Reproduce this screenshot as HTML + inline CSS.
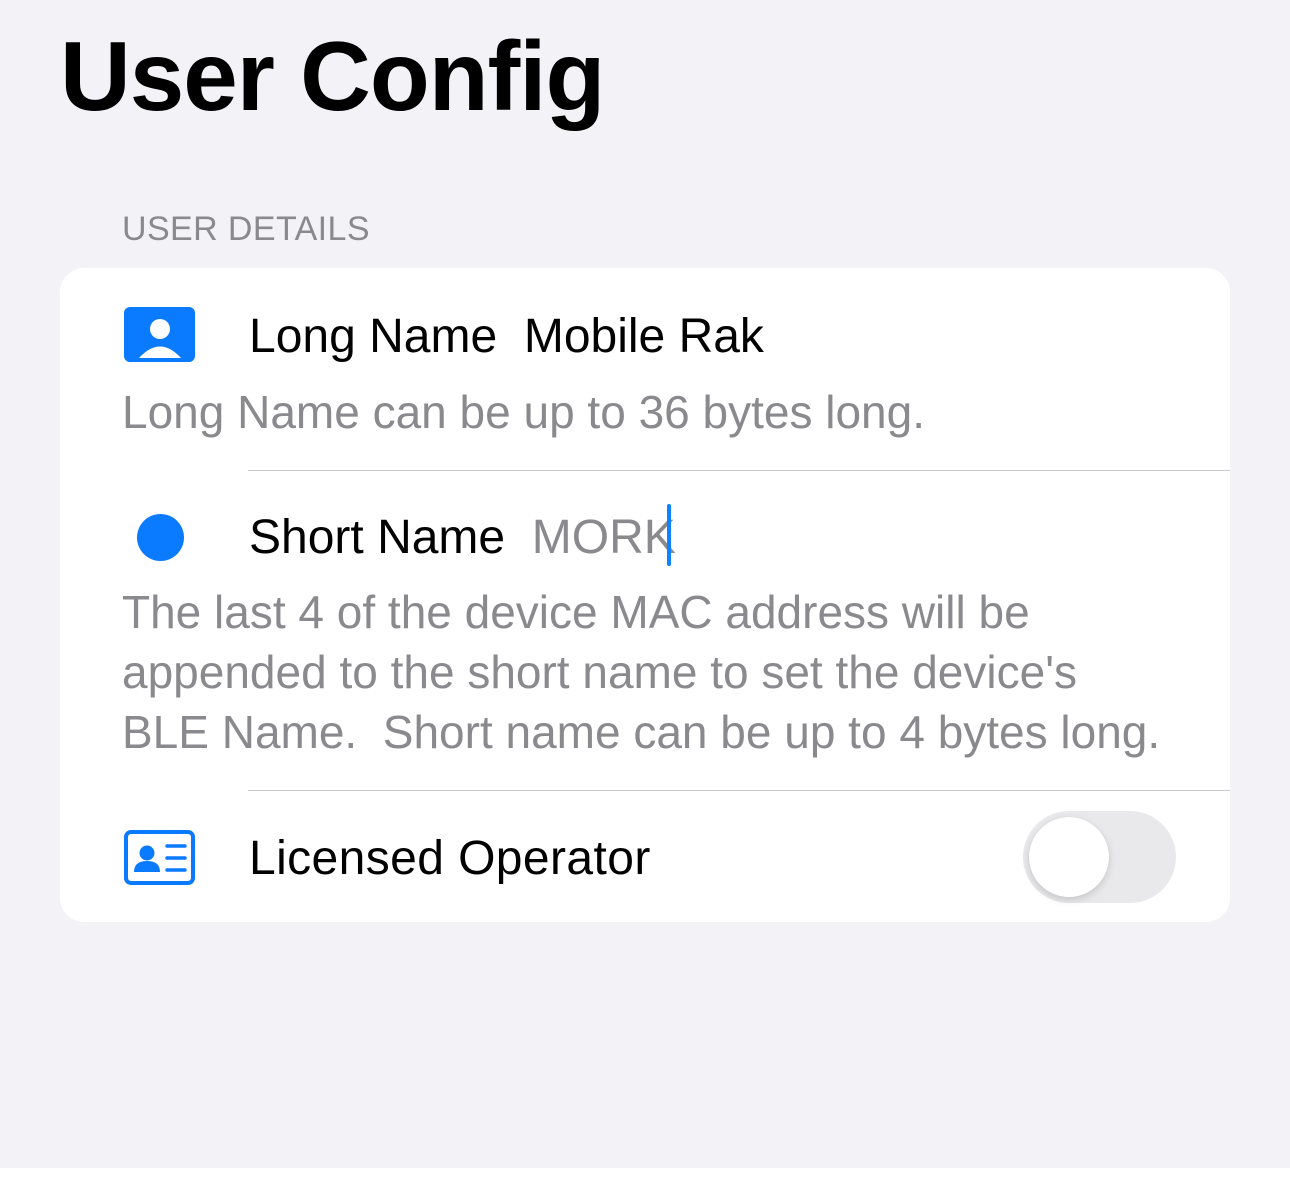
<!DOCTYPE html>
<html><head><style>
body{margin:0;width:1290px;height:1180px;background:#fff;font-family:"Liberation Sans",sans-serif;position:relative;overflow:hidden}
.bg{position:absolute;left:0;top:0;width:1290px;height:1168px;background:#f2f2f7}
.t{position:absolute;white-space:nowrap}
.card{position:absolute;left:60px;top:268px;width:1170px;height:654px;background:#fff;border-radius:24px}
.sep{position:absolute;left:248px;width:982px;height:1px;background:#c8c8cc}
.g{color:#8a8a8e;font-size:46px;line-height:60px}
.b{color:#000;font-size:48px;line-height:56px}
</style></head><body>
<div class="bg"></div>
<div class="t" style="left:60px;top:20px;font-size:98px;font-weight:bold;letter-spacing:-1px">User Config</div>
<div class="t" style="left:122px;top:210px;font-size:34px;color:#8a8a8e;letter-spacing:0.4px">USER DETAILS</div>
<div class="card"></div>
<svg style="position:absolute;left:124px;top:307px" width="72" height="56" viewBox="0 0 72 56">
<rect width="71" height="55" rx="6" fill="#0a7aff"/>
<circle cx="36" cy="22" r="10" fill="#fff"/>
<path d="M15 51 Q36 28 57 51 Z" fill="#fff"/>
</svg>
<div class="t b" style="left:249px;top:309px">Long Name&nbsp; Mobile Rak</div>
<div class="t g" style="left:122px;top:382px">Long Name can be up to 36 bytes long.</div>
<div class="sep" style="top:470px"></div>
<div style="position:absolute;left:137px;top:514px;width:47px;height:47px;border-radius:50%;background:#0a7aff"></div>
<div class="t b" style="left:249px;top:510px">Short Name&nbsp; <span style="color:#8a8a8e">MORK</span></div>
<div style="position:absolute;left:667px;top:504px;width:4px;height:62px;background:#0a84ff;border-radius:2px"></div>
<div class="t g" style="left:122px;top:582px">The last 4 of the device MAC address will be<br>appended to the short name to set the device's<br>BLE Name.&nbsp; Short name can be up to 4 bytes long.</div>
<div class="sep" style="top:790px"></div>
<svg style="position:absolute;left:124px;top:830px" width="72" height="56" viewBox="0 0 72 56">
<rect x="2" y="2" width="67" height="51" rx="5" fill="none" stroke="#0a7aff" stroke-width="4"/>
<circle cx="23" cy="23" r="7.5" fill="#0a7aff"/>
<path d="M10 42 Q10 31 23 31 Q36 31 36 42 Z" fill="#0a7aff"/>
<path d="M43 16H61M43 28H61M43 40H61" stroke="#0a7aff" stroke-width="3.5" stroke-linecap="round"/>
</svg>
<div class="t b" style="left:249px;top:831px;letter-spacing:0.4px">Licensed Operator</div>
<div style="position:absolute;left:1023px;top:811px;width:153px;height:92px;border-radius:46px;background:#e9e9eb"></div>
<div style="position:absolute;left:1029px;top:817px;width:80px;height:80px;border-radius:50%;background:#fff;box-shadow:0 3px 8px rgba(0,0,0,0.15),0 0 1px rgba(0,0,0,0.1)"></div>
</body></html>
